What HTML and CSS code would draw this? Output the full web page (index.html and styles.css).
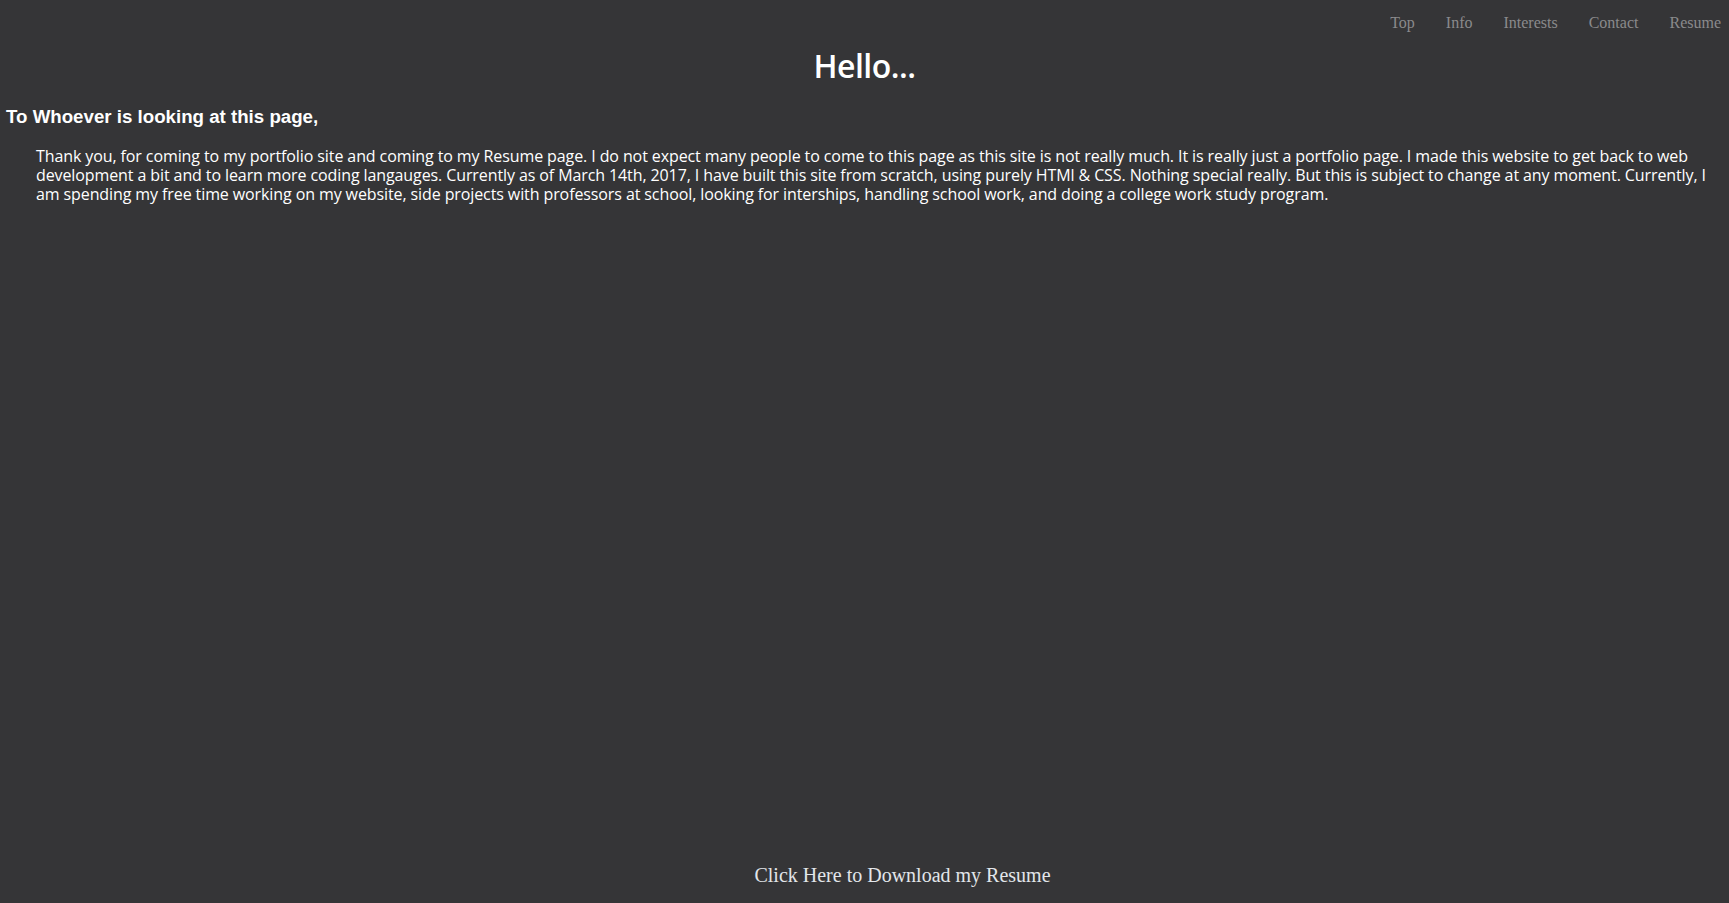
FILE: index.html
```html
<!DOCTYPE html>
<html>
<head>
<meta charset="utf-8">
<title>Resume</title>
<link rel="stylesheet" href="styles.css">
</head>
<body>
<div class="page">
  <nav class="nav">
    <a href="#">Top</a>
    <a href="#">Info</a>
    <a href="#">Interests</a>
    <a href="#">Contact</a>
    <a href="#">Resume</a>
  </nav>
  <h1 class="title">Hello...</h1>
  <h2 class="greeting">To Whoever is looking at this page,</h2>
  <p class="intro">Thank you, for coming to my portfolio site and coming to my Resume page. I do not expect many people to come to this page as this site is not really much. It is really just a portfolio page. I made this website to get back to web development a bit and to learn more coding langauges. Currently as of March 14th, 2017, I have built this site from scratch, using purely HTMl &amp; CSS. Nothing special really. But this is subject to change at any moment. Currently, I am spending my free time working on my website, side projects with professors at school, looking for interships, handling school work, and doing a college work study program.</p>
  <div class="spacer"></div>
  <footer class="footer"><a href="#">Click Here to Download my Resume</a></footer>
</div>
</body>
</html>
```

FILE: styles.css
```css
html, body {
  margin: 0;
  padding: 0;
  height: 100%;
  background: #353537;
}
.page {
  display: flex;
  flex-direction: column;
  height: 903px;
  box-sizing: border-box;
  color: #ffffff;
}
.nav {
  display: flex;
  justify-content: flex-end;
  gap: 31px;
  padding: 13px 8px 0 0;
  font-family: "Liberation Serif", serif;
  font-size: 16px;
  line-height: 19px;
}
.nav a {
  color: #8a8a8c;
  text-decoration: none;
}
.title {
  margin: 14px 0 0;
  text-align: center;
  font-family: "Open Sans", sans-serif;
  font-weight: 600;
  font-size: 32px;
  line-height: 40px;
  letter-spacing: -0.5px;
}
.greeting {
  margin: 20px 0 0 6px;
  font-family: "Liberation Sans", Arial, sans-serif;
  font-weight: bold;
  font-size: 18.7px;
  line-height: 22px;
}
.intro {
  margin: 19px 8px 0 36px;
  font-family: "Open Sans", sans-serif;
  font-size: 16px;
  line-height: 19px;
  letter-spacing: -0.1px;
}
.spacer {
  flex: 1;
}
.footer {
  padding: 0 0 16px 76px;
  text-align: center;
  font-family: "Liberation Serif", serif;
  font-size: 20px;
  line-height: 24px;
}
.footer a {
  color: #e2e6ea;
  text-decoration: none;
}
```
